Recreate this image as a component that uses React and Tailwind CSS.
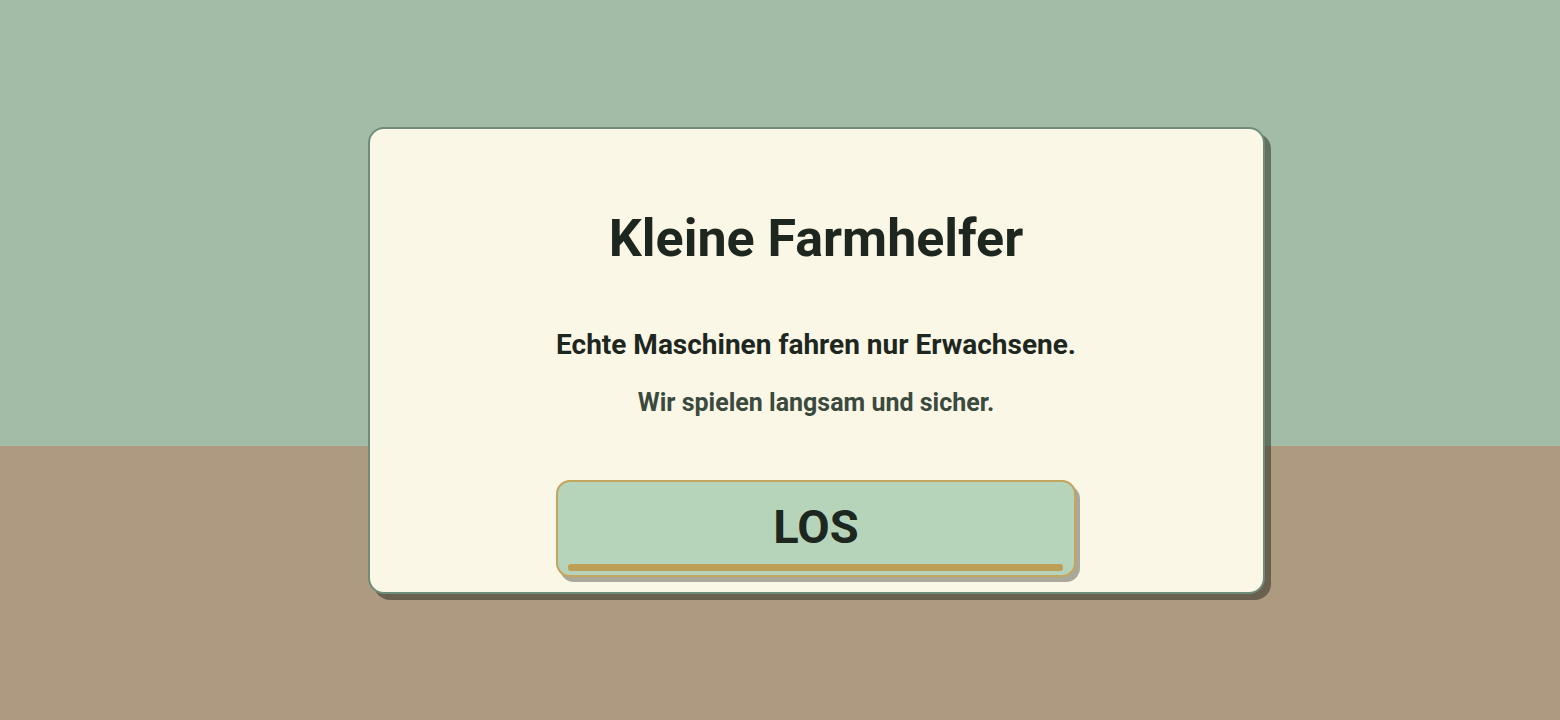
import React from "react";

// Start screen: sky + field backdrop with a centred welcome card
function StartButton({ label, onClick }) {
  return (
    <button
      onClick={onClick}
      className="relative w-[520px] h-[97px] rounded-[14px] border-2 border-[#c4a55e] bg-[#b6d4ba] shadow-[4px_5px_0_rgba(70,70,60,0.45)] flex items-center justify-center"
    >
      <span className="text-[47px] font-bold text-[#1d271f] leading-none mb-[4px]">
        {label}
      </span>
      <span className="absolute left-[10px] right-[11px] bottom-[4px] h-[7px] rounded-[3px] bg-[#bd9e55]" />
    </button>
  );
}

export default function App() {
  return (
    <div className="relative w-full h-[720px] overflow-hidden">
      <div className="flex flex-col h-full">
        <div className="h-[446px] bg-[#a2bca8]" />
        <div className="flex-1 bg-[#ae9a80]" />
      </div>

      <div className="absolute inset-0 flex items-center justify-center pl-[72px]">
        <div
          className="w-[897px] h-[467px] rounded-[16px] border-2 border-[#6f8b7a] bg-[#faf7e6] shadow-[6px_6px_0_rgba(50,50,40,0.55)] flex flex-col items-center pt-[84px]"
          style={{ fontFamily: "Roboto, sans-serif" }}
        >
          <h1 className="text-[52px] font-bold text-[#1d271f] leading-none">
            Kleine Farmhelfer
          </h1>
          <p className="mt-[66px] text-[28px] font-bold text-[#1d271f] leading-none">
            Echte Maschinen fahren nur Erwachsene.
          </p>
          <p className="mt-[31px] text-[25px] font-bold text-[#3b4a3e] leading-none">
            Wir spielen langsam und sicher.
          </p>
          <div className="mt-[65px]">
            <StartButton label="LOS" />
          </div>
        </div>
      </div>
    </div>
  );
}
